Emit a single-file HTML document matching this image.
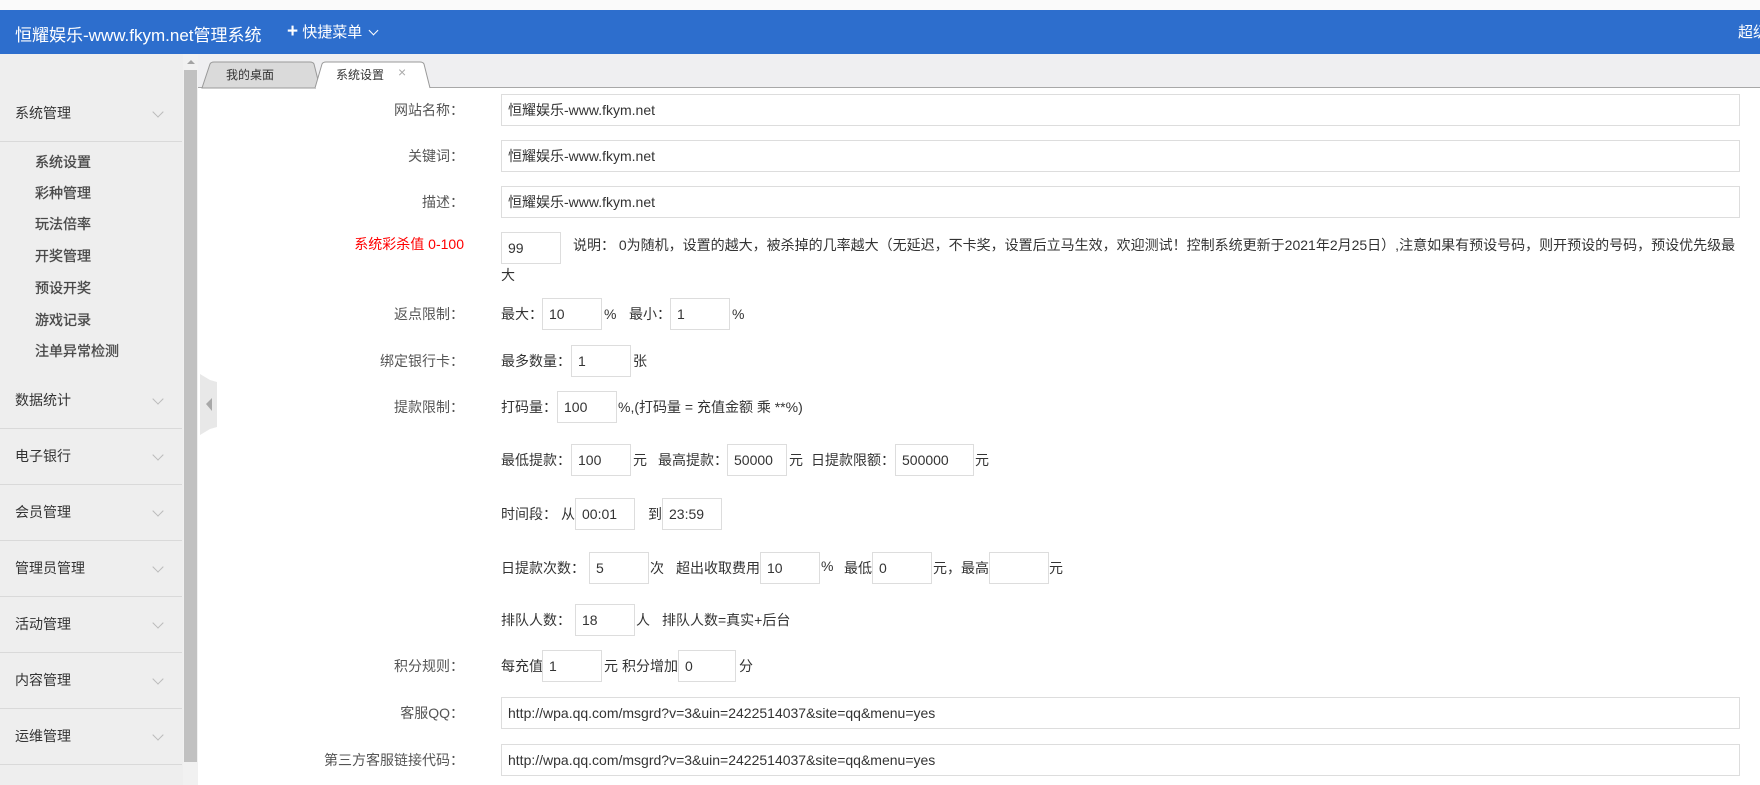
<!DOCTYPE html>
<html><head><meta charset="utf-8">
<style>
*{margin:0;padding:0;box-sizing:border-box}
body{width:1760px;height:785px;overflow:hidden;background:#fff;font-family:"Liberation Sans","Noto Sans CJK SC",sans-serif;font-size:14px;color:#333;position:relative}
.a{position:absolute;white-space:nowrap}
#top{left:0;top:0;width:1760px;height:10px;background:#fafafa}
#hdr{left:0;top:10px;width:1760px;height:44px;background:#2d6ecd;color:#fff}
#side{left:0;top:54px;width:183px;height:731px;background:#eeeeee}
.m{position:absolute;left:15px;font-size:14px;color:#333;line-height:20px}
.s{position:absolute;left:35px;font-size:14px;color:#444;line-height:20px;-webkit-text-stroke:0.35px #555}
.d{position:absolute;left:0;width:182px;height:1px;background:#d9d9d9}
.chev{position:absolute;left:154px;width:8px;height:8px;border-right:1px solid #bbb;border-bottom:1px solid #bbb;transform:rotate(45deg)}
#tabs{left:198px;top:54px;width:1562px;height:34px;background:#efeff1;border-bottom:1px solid #a8a8a8}
.lab{position:absolute;right:1296px;color:#555;line-height:20px;text-align:right}
.in{position:absolute;height:32px;border:1px solid #ddd;background:#fff;padding-left:6px;line-height:30px;color:#333;white-space:nowrap;font-size:14px}
.t{position:absolute;line-height:20px;white-space:nowrap}
</style></head><body>
<div class="a" id="top"></div>
<div class="a" id="hdr">
 <div class="a" style="left:15px;top:11px;font-size:17px">恒耀娱乐-www.fkym.net管理系统</div>
 <div class="a" style="left:287px;top:11px;font-size:15px"><b style="font-size:19px;line-height:18px">+</b> 快捷菜单 <span style="display:inline-block;width:7px;height:7px;border-right:1.5px solid #fff;border-bottom:1.5px solid #fff;transform:rotate(45deg);margin-left:4px;position:relative;top:-3px"></span></div>
 <div class="a" style="left:1738px;top:11px;font-size:15px">超级</div>
</div>
<div class="a" id="side">
 <div class="m" style="top:49px">系统管理</div><div class="chev" style="top:54px"></div>
 <div class="d" style="top:87px"></div>
 <div class="s" style="top:98px">系统设置</div>
 <div class="s" style="top:129px">彩种管理</div>
 <div class="s" style="top:160px">玩法倍率</div>
 <div class="s" style="top:192px">开奖管理</div>
 <div class="s" style="top:224px">预设开奖</div>
 <div class="s" style="top:256px">游戏记录</div>
 <div class="s" style="top:287px">注单异常检测</div>
 <div class="m" style="top:336px">数据统计</div><div class="chev" style="top:341px"></div>
 <div class="d" style="top:374px"></div>
 <div class="m" style="top:392px">电子银行</div><div class="chev" style="top:397px"></div>
 <div class="d" style="top:430px"></div>
 <div class="m" style="top:448px">会员管理</div><div class="chev" style="top:453px"></div>
 <div class="d" style="top:486px"></div>
 <div class="m" style="top:504px">管理员管理</div><div class="chev" style="top:509px"></div>
 <div class="d" style="top:542px"></div>
 <div class="m" style="top:560px">活动管理</div><div class="chev" style="top:565px"></div>
 <div class="d" style="top:598px"></div>
 <div class="m" style="top:616px">内容管理</div><div class="chev" style="top:621px"></div>
 <div class="d" style="top:654px"></div>
 <div class="m" style="top:672px">运维管理</div><div class="chev" style="top:677px"></div>
 <div class="d" style="top:710px"></div>
</div>
<div class="a" style="left:183px;top:54px;width:15px;height:731px;background:#f1f1f1"></div>
<div class="a" style="left:184px;top:70px;width:13px;height:692px;background:#c1c1c1"></div>
<div class="a" style="left:187px;top:60px;width:0;height:0;border-left:4px solid transparent;border-right:4px solid transparent;border-bottom:4px solid #a3a3a3"></div>
<div class="a" id="tabs"></div>
<svg class="a" style="left:198px;top:60px" width="240" height="29">
 <path d="M4 28 L12 4 Q13 2 16 2 L112 2 Q115 2 116 4 L122 28 Z" fill="#dadada" stroke="#999"/>
 <path d="M117 28 L124 4 Q125 2 128 2 L222 2 Q225 2 226 4 L232 28" fill="#fff" stroke="#999"/>
 <rect x="118" y="27.5" width="113" height="2" fill="#fff"/>
</svg>
<div class="a" style="left:226px;top:66px;font-size:12px;color:#333">我的桌面</div>
<div class="a" style="left:336px;top:66px;font-size:12px;color:#333">系统设置</div>
<div class="a" style="left:398px;top:64px;font-size:14px;color:#aaa">×</div>
<svg class="a" style="left:200px;top:374px" width="18" height="61"><path d="M0 0 L10 6 L17 8 L17 53 L10 55 L0 61 Z" fill="#e8e8e8"/><path d="M6 30 L12 24 L12 37 Z" fill="#a8a8a8"/></svg>

<div class="lab" style="top:100px">网站名称：</div>
<div class="in" style="left:501px;top:94px;width:1239px">恒耀娱乐-www.fkym.net</div>
<div class="lab" style="top:146px">关键词：</div>
<div class="in" style="left:501px;top:140px;width:1239px">恒耀娱乐-www.fkym.net</div>
<div class="lab" style="top:192px">描述：</div>
<div class="in" style="left:501px;top:186px;width:1239px">恒耀娱乐-www.fkym.net</div>

<div class="lab" style="top:234px;color:#f00">系统彩杀值 0-100</div>
<div class="in" style="left:501px;top:232px;width:60px">99</div>
<div class="t" style="left:573px;top:235px">说明： 0为随机，设置的越大，被杀掉的几率越大（无延迟，不卡奖，设置后立马生效，欢迎测试！控制系统更新于2021年2月25日）,注意如果有预设号码，则开预设的号码，预设优先级最</div>
<div class="t" style="left:501px;top:265px">大</div>

<div class="lab" style="top:304px">返点限制：</div>
<div class="t" style="left:501px;top:304px">最大：</div>
<div class="in" style="left:542px;top:298px;width:60px">10</div>
<div class="t" style="left:604px;top:304px">%</div>
<div class="t" style="left:629px;top:304px">最小：</div>
<div class="in" style="left:670px;top:298px;width:60px">1</div>
<div class="t" style="left:732px;top:304px">%</div>

<div class="lab" style="top:351px">绑定银行卡：</div>
<div class="t" style="left:501px;top:351px">最多数量：</div>
<div class="in" style="left:571px;top:345px;width:60px">1</div>
<div class="t" style="left:633px;top:351px">张</div>

<div class="lab" style="top:397px">提款限制：</div>
<div class="t" style="left:501px;top:397px">打码量：</div>
<div class="in" style="left:557px;top:391px;width:60px">100</div>
<div class="t" style="left:618px;top:397px">%,(打码量 = 充值金额 乘 **%)</div>

<div class="t" style="left:501px;top:450px">最低提款：</div>
<div class="in" style="left:571px;top:444px;width:60px">100</div>
<div class="t" style="left:633px;top:450px">元</div>
<div class="t" style="left:658px;top:450px">最高提款：</div>
<div class="in" style="left:727px;top:444px;width:60px">50000</div>
<div class="t" style="left:789px;top:450px">元</div>
<div class="t" style="left:811px;top:450px">日提款限额：</div>
<div class="in" style="left:895px;top:444px;width:79px">500000</div>
<div class="t" style="left:975px;top:450px">元</div>

<div class="t" style="left:501px;top:504px">时间段：</div>
<div class="t" style="left:561px;top:504px">从</div>
<div class="in" style="left:575px;top:498px;width:60px">00:01</div>
<div class="t" style="left:648px;top:504px">到</div>
<div class="in" style="left:662px;top:498px;width:60px">23:59</div>

<div class="t" style="left:501px;top:558px">日提款次数：</div>
<div class="in" style="left:589px;top:552px;width:60px">5</div>
<div class="t" style="left:650px;top:558px">次</div>
<div class="t" style="left:676px;top:558px">超出收取费用</div>
<div class="in" style="left:760px;top:552px;width:60px">10</div>
<div class="t" style="left:821px;top:556px">%</div>
<div class="t" style="left:844px;top:558px">最低</div>
<div class="in" style="left:872px;top:552px;width:60px">0</div>
<div class="t" style="left:933px;top:558px">元，最高</div>
<div class="in" style="left:989px;top:552px;width:60px"></div>
<div class="t" style="left:1049px;top:558px">元</div>

<div class="t" style="left:501px;top:610px">排队人数：</div>
<div class="in" style="left:575px;top:604px;width:60px">18</div>
<div class="t" style="left:636px;top:610px">人</div>
<div class="t" style="left:662px;top:610px">排队人数=真实+后台</div>

<div class="lab" style="top:656px">积分规则：</div>
<div class="t" style="left:501px;top:656px">每充值</div>
<div class="in" style="left:542px;top:650px;width:60px">1</div>
<div class="t" style="left:604px;top:656px">元</div>
<div class="t" style="left:622px;top:656px">积分增加</div>
<div class="in" style="left:678px;top:650px;width:58px">0</div>
<div class="t" style="left:739px;top:656px">分</div>

<div class="lab" style="top:703px">客服QQ：</div>
<div class="in" style="left:501px;top:697px;width:1239px">http://wpa.qq.com/msgrd?v=3&amp;uin=2422514037&amp;site=qq&amp;menu=yes</div>
<div class="lab" style="top:750px">第三方客服链接代码：</div>
<div class="in" style="left:501px;top:744px;width:1239px">http://wpa.qq.com/msgrd?v=3&amp;uin=2422514037&amp;site=qq&amp;menu=yes</div>
</body></html>
